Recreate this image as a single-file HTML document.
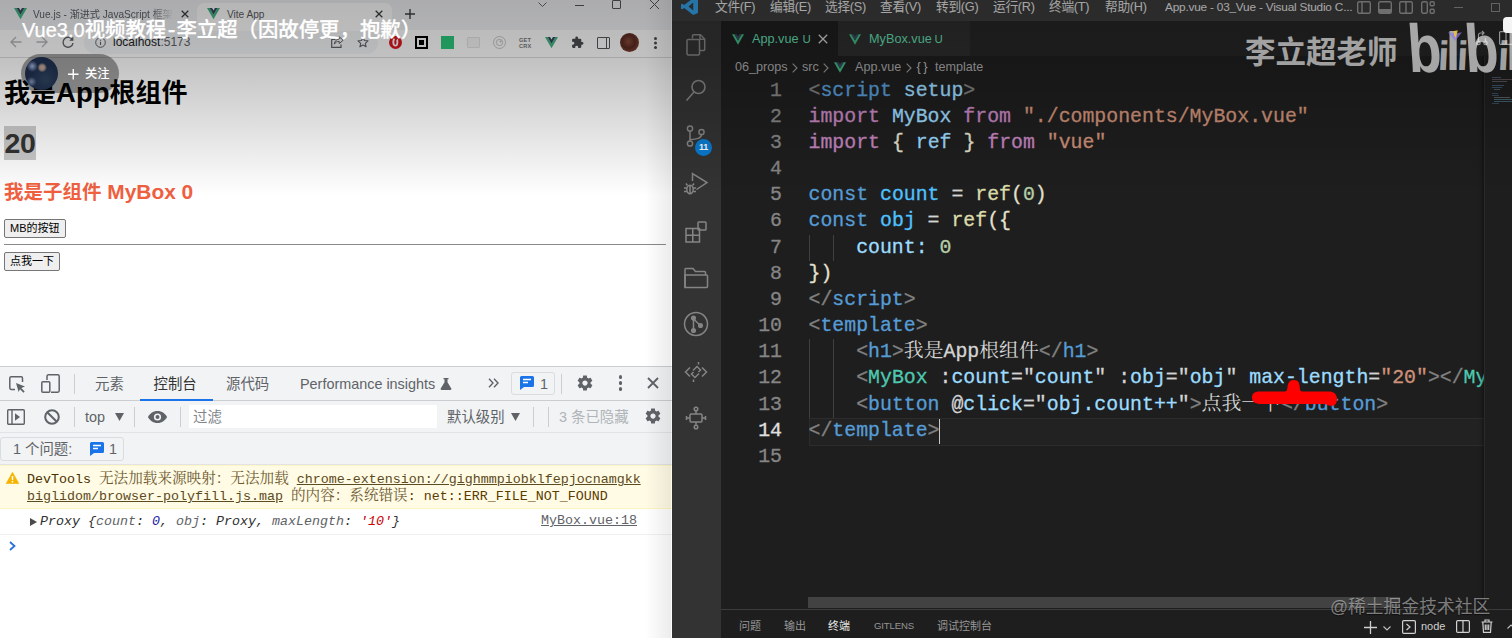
<!DOCTYPE html>
<html lang="zh-CN">
<head>
<meta charset="utf-8">
<title>Vue3.0视频教程</title>
<style>
*{box-sizing:border-box;margin:0;padding:0}
html,body{width:1512px;height:638px;overflow:hidden;background:#1e1e1e}
body{position:relative;font-family:"Liberation Sans","Noto Sans CJK SC",sans-serif}
.abs{position:absolute}
svg{display:block;overflow:visible}
/* ---------- browser ---------- */
#browser{position:absolute;left:0;top:0;width:672px;height:638px;background:#fff;overflow:hidden}
#tabstrip{position:absolute;left:0;top:0;width:672px;height:30px;background:#f1f2f5}
#tab-active{position:absolute;left:197px;top:3px;width:195px;height:27px;background:#fff;border-radius:7px 7px 0 0}
.tabtxt{position:absolute;top:8px;font-size:10.1px;color:#5a5d62;white-space:nowrap;line-height:13px}
#toolbar{position:absolute;left:0;top:30px;width:672px;height:28px;background:#fff;border-bottom:1px solid #dcdcdc}
#omni{position:absolute;left:84px;top:1px;width:294px;height:23px;border-radius:11.5px;background:#f4f6f8}
#page{position:absolute;left:0;top:58px;width:672px;height:309px;background:#fff}
#page h1{position:absolute;left:4px;font-weight:bold;font-size:26px;line-height:34px;white-space:nowrap;color:#000}
#page h2{position:absolute;left:4px;top:120.5px;font-weight:bold;font-size:19.5px;line-height:26px;color:#f0603f;white-space:nowrap}
.btn{position:absolute;left:4px;height:19px;border:1px solid #767676;border-radius:2px;background:#efefef;font-size:11px;line-height:17px;padding:0 5px;color:#000;white-space:nowrap}
/* ---------- devtools ---------- */
#devtools{position:absolute;left:0;top:366px;width:672px;height:272px;background:#fff;border-top:1px solid #cbcdd1;font-size:14.4px;color:#5f6368}
#dt-tabs{position:absolute;left:0;top:0;width:672px;height:34px;background:#f1f3f4;border-bottom:1px solid #cbcdd1}
#dt-bar{position:absolute;left:0;top:34px;width:672px;height:32px;background:#f1f3f4;border-bottom:1px solid #e1e3e6}
#dt-issues{position:absolute;left:0;top:66px;width:672px;height:32px;background:#f1f3f4;border-bottom:1px solid #e1e3e6}
.dtt{position:absolute;top:8px;line-height:19px;white-space:nowrap}
.vsep{position:absolute;width:1px;background:#cbcdd1}
#warn{position:absolute;left:0;top:98px;width:672px;height:44px;background:#fffbe5;border-top:1px solid #fff5c2;border-bottom:1px solid #fff5c2;color:#5c3c00;font-family:"Liberation Mono","Noto Serif CJK SC",monospace;font-size:13.33px;line-height:17px;white-space:nowrap}
.wl{line-height:17px;height:17px}
.cj{font-size:14.6px;line-height:17px;color:#6e5a30}
#warn u{text-decoration:underline;color:#5c4a20}
#logrow{position:absolute;left:0;top:142px;width:672px;height:26px;border-bottom:1px solid #f0f0f0;font-family:"Liberation Mono",monospace;font-size:13.33px;line-height:17px;white-space:nowrap;color:#303030}
.g{color:#5f6368}.nb{color:#1a1aa6}.r{color:#c80000}
/* ---------- vscode ---------- */
#vscode{position:absolute;left:672px;top:0;width:840px;height:638px;background:#1e1e1e;overflow:hidden}
#titlebar{position:absolute;left:0;top:0;width:840px;height:21.5px;background:#3c3c3c;color:#e6e6e6;font-size:12.7px;line-height:15px;white-space:nowrap;letter-spacing:-.25px}
#titlebar span{position:absolute;top:0}
#activity{position:absolute;left:0;top:21px;width:49px;height:617px;background:#333333}
#edtabs{position:absolute;left:49px;top:21px;width:791px;height:35px;background:#252526}
.edtab{position:absolute;top:0;height:35px;font-size:12.7px;line-height:37px;color:#62dcae;white-space:nowrap}
#crumbs{position:absolute;left:49px;top:56px;width:791px;height:22px;font-size:12.6px;line-height:22px;color:#a9a9a9;white-space:nowrap}
#crumbs span{position:absolute;top:0}
#code{position:absolute;left:49px;top:77.6px;-webkit-text-stroke:.3px;width:762px;height:520px;font-family:"Liberation Mono","Noto Sans CJK SC",monospace;font-size:19.85px;color:#d4d4d4}
.ln{position:absolute;left:0;width:762px;height:26.17px;line-height:26.17px;white-space:pre}
.ln i{position:absolute;left:0;width:61px;text-align:right;font-style:normal;color:#858585}
.ln b{position:absolute;left:87.5px;font-weight:normal}
.z{font-family:"Noto Serif CJK SC",serif;-webkit-text-stroke:0;line-height:0}
.w{color:#4fc1ff}.k{color:#569cd6}.p{color:#808080}.c{color:#c586c0}.v{color:#9cdcfe}.s{color:#ce9178}.f{color:#dcdcaa}.n{color:#b5cea8}.t{color:#4ec9b0}.y{color:#e4e0cf}
.ln.cur i{color:#e0e0e0}
.ln.cur::before{content:'';position:absolute;left:88px;top:0;width:674px;height:26px;border:1px solid #2c2c2c;background:#222}
.guide{position:absolute;width:1px;background:#404040}
#panel{position:absolute;left:49px;top:609px;width:791px;height:29px;background:#1e1e1e;border-top:1px solid #3c3c3c;font-size:11px;color:#969696;white-space:nowrap}
#panel span{position:absolute;top:9px;line-height:14px}

#crumbs .gt{color:#8a8a8a;font-size:12px;transform:scaleY(1.15)}
#minimap{position:absolute;left:812px;top:56px;width:28px;height:553px;background:#1e1e1e;border-left:1px solid #2a2a2a;box-shadow:-2px 0 3px rgba(0,0,0,.35)}
#shade{position:absolute;left:0;top:0;width:1512px;height:200px;background:linear-gradient(to bottom,rgba(0,0,0,.29) 0,rgba(0,0,0,.243) 58px,rgba(0,0,0,0) 196px);pointer-events:none}
#vtitle{left:22px;top:16.3px;font-size:20.4px;line-height:28px;color:#fff;white-space:nowrap;font-weight:500;-webkit-text-stroke:.25px #fff}
#vtitle .lt{font-size:20px}
#vtitle .hy{font-size:23px;line-height:20px;margin:0 1px 0 1.5px}
#follow{left:21px;top:53.5px;width:98px;height:39.5px;border-radius:20px;background:rgba(0,0,0,.37)}
#avatar{position:absolute;left:3.5px;top:3.5px;width:33px;height:33px;border-radius:50%;background:radial-gradient(circle at 52% 32%,#9c877c 0,#8a766e 9%,rgba(80,70,80,0) 17%),radial-gradient(circle at 22% 28%,#7f8fb0 0,rgba(80,90,120,0) 16%),radial-gradient(circle at 20% 75%,#6a7a98 0,rgba(60,70,100,0) 14%),radial-gradient(circle at 62% 68%,#25374d 0,#1a2740 45%,#16213a 100%)}
#wm1{left:1245px;top:30px;font-size:30.500px;line-height:44px;font-weight:bold;color:rgba(255,255,255,.6);white-space:nowrap}
#wm2{left:1410px;top:0;width:110px;height:90px;font-weight:bold;color:rgba(255,255,255,.62);white-space:nowrap}
#wm2 span{position:absolute;display:block;transform-origin:0 100%}
#wm2 .bb{font-size:58px;line-height:58px;top:25px;transform:scale(.95,1.17) skewX(5deg)}
#wm2 .bi{font-size:41px;line-height:41px;top:36px;transform:skewX(-3deg)}
#wm2 .bl{font-size:54px;line-height:54px;top:24px;transform:scaleX(.95)}
#wm3{left:1330px;top:593.5px;font-size:17.8px;text-shadow:0 1px 1px rgba(0,0,0,.5);line-height:26px;color:rgba(255,255,255,.45);white-space:nowrap}
</style>
</head>
<body>
<div id="browser">
  <div id="tabstrip">
    <div id="tab-active"></div>
    <svg class="abs" style="left:14px;top:8px" width="13" height="12" viewBox="0 0 26 24"><path d="M0 0h5.2L13 13.5 20.8 0H26L13 22.5z" fill="#41b883"/><path d="M5.2 0h4.9L13 5l2.9-5h4.9L13 13.5z" fill="#35495e"/></svg>
    <span class="tabtxt" id="tt1" style="left:33px;width:141px;overflow:hidden;-webkit-mask-image:linear-gradient(to right,#000 84%,transparent 100%);mask-image:linear-gradient(to right,#000 84%,transparent 100%)">Vue.js - 渐进式 JavaScript 框架</span>
    <svg class="abs" style="left:181px;top:10px" width="8" height="8" viewBox="0 0 8 8"><path d="M0.7 0.7L7.3 7.3M7.3 0.7L0.7 7.3" stroke="#3c4043" stroke-width="1.3" fill="none"/></svg>
    <svg class="abs" style="left:207px;top:8px" width="13" height="12" viewBox="0 0 26 24"><path d="M0 0h5.2L13 13.5 20.8 0H26L13 22.5z" fill="#41b883"/><path d="M5.2 0h4.9L13 5l2.9-5h4.9L13 13.5z" fill="#35495e"/></svg>
    <span class="tabtxt" style="left:227px">Vite App</span>
    <svg class="abs" style="left:375px;top:10px" width="8" height="8" viewBox="0 0 8 8"><path d="M0.7 0.7L7.3 7.3M7.3 0.7L0.7 7.3" stroke="#3c4043" stroke-width="1.3" fill="none"/></svg>
    <svg class="abs" style="left:405px;top:9px" width="10" height="10" viewBox="0 0 10 10"><path d="M5 0v10M0 5h10" stroke="#3c4043" stroke-width="1.4" fill="none"/></svg>
    <svg class="abs" style="left:538px;top:2px" width="9" height="5" viewBox="0 0 9 5"><path d="M0.5 0.5L4.5 4.5L8.5 0.5" stroke="#666" stroke-width="1" fill="none"/></svg>
    <div class="abs" style="left:575px;top:5px;width:9px;height:1px;background:#555"></div>
    <div class="abs" style="left:612px;top:0;width:9px;height:9px;border:1px solid #555;border-radius:1px"></div>
    <svg class="abs" style="left:650px;top:0" width="9" height="9" viewBox="0 0 9 9"><path d="M0 0L9 9M9 0L0 9" stroke="#555" stroke-width="1" fill="none"/></svg>
  </div>
  <div id="toolbar">
    <div id="omni"></div>
    <svg class="abs" style="left:10px;top:6px" width="12" height="12" viewBox="0 0 12 12"><path d="M11.5 6H1.2M6 1L1 6l5 5" stroke="#b4b6b9" stroke-width="1.4" fill="none"/></svg>
    <svg class="abs" style="left:36px;top:6px" width="12" height="12" viewBox="0 0 12 12"><path d="M0.5 6h10.3M6 1l5 5-5 5" stroke="#b4b6b9" stroke-width="1.4" fill="none"/></svg>
    <svg class="abs" style="left:62px;top:6px" width="12" height="12" viewBox="0 0 12 12"><path d="M10.6 4.2A5 5 0 1 0 11 7" stroke="#5f6368" stroke-width="1.4" fill="none"/><path d="M11.4 0.6v4.2H7.2z" fill="#5f6368"/></svg>
    <svg class="abs" style="left:95px;top:7px" width="11" height="11" viewBox="0 0 11 11"><circle cx="5.5" cy="5.5" r="4.8" stroke="#5f6368" stroke-width="1" fill="none"/><path d="M5.5 4.8v3.2M5.5 2.8v1" stroke="#5f6368" stroke-width="1.1"/></svg>
    <span class="abs" id="url" style="left:113px;top:5px;font-size:12px;line-height:15px;color:#202124">localhost<span style="color:#5f6368">:5173</span></span>
    <svg class="abs" style="left:331px;top:6px" width="13" height="12" viewBox="0 0 13 12"><path d="M4.5 3.5H0.7V11.3H10V8.5" stroke="#5f6368" stroke-width="1.2" fill="none"/><path d="M8.2 0.8L12.2 4.2L8.2 7.6V5.4C5.6 5.4 4.2 6.4 3.4 8.2C3.6 5.2 5.2 3.3 8.2 3z" stroke="#5f6368" stroke-width="1" fill="none"/></svg>
    <svg class="abs" style="left:357px;top:6px" width="12" height="12" viewBox="0 0 24 24"><path d="M12 2.5l2.9 6.6 7.1.7-5.4 4.8 1.6 7L12 17.9 5.8 21.6l1.6-7L2 9.8l7.1-.7z" stroke="#5f6368" stroke-width="2.2" fill="none" stroke-linejoin="round"/></svg>
    <svg class="abs" style="left:389px;top:6px" width="13" height="13" viewBox="0 0 13 13"><circle cx="6.5" cy="6.5" r="6.5" fill="#e01822"/><path d="M4.2 2.5C3 5 3 8.3 4.6 9.8C6 11 8 10.6 8.8 9C9.6 7.3 9.4 4.6 8.8 2.5L7.2 4.6C7.6 6 7.6 7.6 7 8.4C6.5 9 5.8 8.8 5.5 8C5.1 6.8 5.3 4.6 6 2.8z" fill="#fff"/></svg>
    <div class="abs" style="left:415px;top:6px;width:13px;height:13px;border:2px solid #000;background:#fff"><div style="margin:2px;width:5px;height:5px;background:#000"></div></div>
    <div class="abs" style="left:441px;top:6px;width:13px;height:13px;background:#2bc97c"></div>
    <div class="abs" style="left:467px;top:7px;width:13px;height:11px;border:1px solid #e4e4e4;border-radius:1px;background:#f6f6f6"></div>
    <svg class="abs" style="left:493px;top:6px" width="13" height="13" viewBox="0 0 13 13"><circle cx="6.5" cy="6.5" r="6" stroke="#c8c8c8" stroke-width="1" fill="none"/><circle cx="6.5" cy="6.5" r="3.2" stroke="#c8c8c8" stroke-width="1" fill="none"/><circle cx="7.5" cy="5.5" r="1" fill="#c0c0c0"/></svg>
    <span class="abs" style="left:519px;top:7px;font-size:5.6px;line-height:6px;font-weight:bold;color:#777;letter-spacing:.2px">GET<br>CRX</span>
    <svg class="abs" style="left:545px;top:7px" width="13" height="12" viewBox="0 0 26 24"><path d="M0 0h5.2L13 13.5 20.8 0H26L13 22.5z" fill="#41b883"/><path d="M5.2 0h4.9L13 5l2.9-5h4.9L13 13.5z" fill="#35495e"/></svg>
    <svg class="abs" style="left:571px;top:6px" width="13" height="13" viewBox="0 0 24 24"><path d="M20.5 11H19V7a2 2 0 0 0-2-2h-4V3.5a2.5 2.5 0 0 0-5 0V5H4a2 2 0 0 0-2 2v3.8h1.5a2.7 2.7 0 0 1 0 5.4H2V20a2 2 0 0 0 2 2h3.8v-1.5a2.7 2.7 0 0 1 5.4 0V22H17a2 2 0 0 0 2-2v-4h1.5a2.5 2.5 0 0 0 0-5z" fill="#4a4d51"/></svg>
    <div class="abs" style="left:597px;top:6.500px;width:13px;height:12px;border:1.700px solid #55585c;border-radius:1px"><div style="position:absolute;right:2px;top:0;width:1.500px;height:100%;background:#55585c"></div></div>
    <div class="abs" style="left:620px;top:3px;width:19px;height:19px;border-radius:50%;background:radial-gradient(circle at 45% 45%,#8a4a3a 0,#5a2a22 45%,#7a3f30 70%,#a77a5a 100%)"></div>
    <div class="abs" style="left:654px;top:7px;width:3px;height:3px;border-radius:50%;background:#4a4d51;box-shadow:0 4.5px 0 #4a4d51,0 9px 0 #4a4d51"></div>
  </div>
  <div id="page">
    <h1 style="top:18px">我是<span style="font-size:27.500px">App</span>根组件</h1>
    <h1 style="top:68px;background:#cbcbcb;color:#333;height:34px;width:32px;font-size:28.500px;line-height:34px;letter-spacing:-.4px;padding-left:.500px;overflow:hidden">20</h1>
    <h2>我是子组件<span style="font-size:20.900px"> MyBox 0</span></h2>
    <div class="btn" style="top:161px">MB的按钮</div>
    <div class="abs" style="left:4px;top:186px;width:662px;height:1px;background:#8a8a8a"></div>
    <div class="btn" style="top:194px">点我一下</div>
  </div>
  <div id="devtools">
    <div id="dt-tabs">
      <svg class="abs" style="left:9px;top:9px" width="17" height="17" viewBox="0 0 17 17"><path d="M6 13.5H2.2A1.4 1.4 0 0 1 .8 12.1V2.2A1.4 1.4 0 0 1 2.2.8h9.9a1.4 1.4 0 0 1 1.4 1.4V6" stroke="#5f6368" stroke-width="1.5" fill="none"/><path d="M7 7l9 3.4-3.7 1.6 3.4 3.4-1.3 1.3-3.4-3.4L9.6 16z" fill="#5f6368"/></svg>
      <svg class="abs" style="left:41px;top:7px" width="19" height="19" viewBox="0 0 19 19"><path d="M6 6V2.2A1.4 1.4 0 0 1 7.400 .8h9.400a1.400 1.400 0 0 1 1.400 1.400v14.600a1.400 1.400 0 0 1-1.400 1.400H10" stroke="#5f6368" stroke-width="1.5" fill="none"/><rect x=".8" y="7.800" width="8" height="10.400" rx="1" stroke="#5f6368" stroke-width="1.500" fill="none"/></svg>
      <div class="vsep" style="left:74px;top:7px;height:20px"></div>
      <span class="dtt" style="left:95px">元素</span>
      <span class="dtt" style="left:153.5px;color:#333">控制台</span>
      <div class="abs" style="left:140px;top:32px;width:73px;height:2px;background:#1a73e8"></div>
      <span class="dtt" style="left:226px">源代码</span>
      <span class="dtt" style="left:300px">Performance insights</span>
      <svg class="abs" style="left:440px;top:11px" width="12" height="12" viewBox="0 0 12 12"><path d="M3.500 0h5v1.200h-1v3l3.800 6.300a1 1 0 0 1-.9 1.500H1.600a1 1 0 0 1-.9-1.500L4.500 4.200v-3h-1z" fill="#5f6368"/></svg>
      <svg class="abs" style="left:488px;top:11px" width="11" height="10" viewBox="0 0 11 10"><path d="M1 .8L5 5 1 9.200M6 .8L10 5 6 9.200" stroke="#5f6368" stroke-width="1.400" fill="none"/></svg>
      <div class="abs" style="left:511px;top:5px;width:44px;height:23px;border:1px solid #dadce0;border-radius:3px"></div>
      <svg class="abs" style="left:520px;top:9px" width="14" height="14" viewBox="0 0 14 14"><path d="M1.500 0h11A1.500 1.500 0 0 1 14 1.500v8A1.500 1.500 0 0 1 12.500 11H4l-4 3V1.500A1.500 1.500 0 0 1 1.500 0z" fill="#1a73e8"/><path d="M3 3.500h8M3 6.500h5" stroke="#fff" stroke-width="1.300"/></svg>
      <span class="dtt" style="left:540px;color:#5f6368">1</span>
      <div class="vsep" style="left:561px;top:7px;height:20px"></div>
      <svg class="abs gear" style="left:576px;top:7px" width="18" height="18" viewBox="0 0 24 24"><path d="M19.430 12.980c.040-.320.070-.640.070-.980s-.030-.660-.070-.980l2.110-1.650c.190-.150.240-.420.120-.640l-2-3.460c-.120-.220-.390-.300-.610-.220l-2.490 1c-.520-.400-1.080-.730-1.690-.980l-.380-2.650C14.460 2.180 14.250 2 14 2h-4c-.250 0-.460.180-.490.420l-.38 2.650c-.610.250-1.170.590-1.690.980l-2.490-1c-.230-.090-.490 0-.610.220l-2 3.460c-.130.220-.070.490.12.640l2.110 1.650c-.040.320-.070.650-.070.980s.030.660.070.980l-2.110 1.650c-.190.150-.240.420-.12.640l2 3.460c.120.220.390.300.610.220l2.490-1c.520.400 1.080.730 1.690.980l.38 2.650c.030.240.240.420.490.420h4c.250 0 .460-.180.490-.420l.38-2.650c.610-.250 1.170-.590 1.690-.980l2.490 1c.230.090.490 0 .610-.220l2-3.460c.120-.220.070-.490-.12-.640l-2.110-1.650zM12 15.500c-1.930 0-3.500-1.570-3.500-3.500s1.570-3.500 3.500-3.500 3.500 1.570 3.500 3.500-1.570 3.500-3.500 3.500z" fill="#5f6368"/></svg>
      <div class="abs" style="left:618.500px;top:8px;width:3.500px;height:3.500px;border-radius:50%;background:#5f6368;box-shadow:0 6px 0 #5f6368,0 12px 0 #5f6368"></div>
      <svg class="abs" style="left:647px;top:10px" width="12" height="12" viewBox="0 0 12 12"><path d="M1 1l10 10M11 1L1 11" stroke="#5f6368" stroke-width="1.800" fill="none"/></svg>
    </div>
    <div id="dt-bar">
      <svg class="abs" style="left:7px;top:8px" width="18" height="16" viewBox="0 0 18 16"><rect x=".700" y=".700" width="16.600" height="14.600" rx="1" stroke="#5f6368" stroke-width="1.400" fill="none"/><path d="M5 .700v14.600" stroke="#5f6368" stroke-width="1.400"/><path d="M8 4.200l5 3.800-5 3.800z" fill="#5f6368"/></svg>
      <svg class="abs" style="left:44px;top:8px" width="16" height="16" viewBox="0 0 16 16"><circle cx="8" cy="8" r="6.800" stroke="#5f6368" stroke-width="2" fill="none"/><path d="M3.200 3.200l9.600 9.600" stroke="#5f6368" stroke-width="2"/></svg>
      <div class="vsep" style="left:74px;top:6px;height:20px"></div>
      <span class="dtt" style="left:85px;top:7px">top</span>
      <svg class="abs" style="left:115px;top:12px" width="9" height="8" viewBox="0 0 9 8"><path d="M0 0h9L4.500 8z" fill="#5f6368"/></svg>
      <div class="vsep" style="left:134px;top:6px;height:20px"></div>
      <svg class="abs" style="left:148px;top:10px" width="19" height="12" viewBox="0 0 19 12"><path d="M9.500 0C5 0 1.500 2.700 0 6c1.500 3.300 5 6 9.500 6s8-2.700 9.500-6C17.500 2.700 14 0 9.500 0z" fill="#5f6368"/><circle cx="9.500" cy="6" r="3.600" fill="#f1f3f4"/><circle cx="9.500" cy="6" r="2" fill="#5f6368"/></svg>
      <div class="vsep" style="left:180px;top:6px;height:20px"></div>
      <div class="abs" style="left:189px;top:4px;width:248px;height:23px;background:#fff;border-radius:1px"></div>
      <span class="dtt" style="left:193px;top:7px;color:#80868b">过滤</span>
      <span class="dtt" style="left:447px;top:7px">默认级别</span>
      <svg class="abs" style="left:511px;top:12px" width="9" height="8" viewBox="0 0 9 8"><path d="M0 0h9L4.500 8z" fill="#5f6368"/></svg>
      <div class="vsep" style="left:533px;top:6px;height:20px"></div>
      <div class="vsep" style="left:548px;top:6px;height:20px"></div>
      <span class="dtt" style="left:559px;top:7px;color:#b0b3b8">3 条已隐藏</span>
      <svg class="abs gear" style="left:644px;top:6px" width="18" height="18" viewBox="0 0 24 24"><path d="M19.430 12.980c.040-.320.070-.640.070-.980s-.030-.660-.070-.980l2.110-1.650c.190-.150.240-.420.120-.640l-2-3.460c-.120-.220-.390-.300-.610-.220l-2.490 1c-.520-.400-1.080-.730-1.690-.980l-.380-2.650C14.460 2.180 14.250 2 14 2h-4c-.250 0-.460.180-.490.420l-.38 2.650c-.610.250-1.170.590-1.690.980l-2.490-1c-.230-.090-.490 0-.610.220l-2 3.460c-.130.220-.070.490.12.640l2.110 1.650c-.040.320-.070.650-.070.980s.030.660.070.980l-2.110 1.650c-.190.150-.240.420-.12.640l2 3.460c.120.220.390.300.610.220l2.490-1c.520.400 1.080.730 1.690.980l.38 2.650c.030.240.240.420.490.420h4c.250 0 .460-.180.490-.420l.38-2.650c.610-.250 1.170-.590 1.690-.980l2.490 1c.230.090.490 0 .610-.220l2-3.460c.120-.220.070-.490-.12-.640l-2.110-1.650zM12 15.500c-1.930 0-3.500-1.570-3.500-3.500s1.570-3.500 3.500-3.500 3.500 1.570 3.500 3.500-1.570 3.500-3.500 3.500z" fill="#5f6368"/></svg>
    </div>
    <div id="dt-issues">
      <div class="abs" style="left:0;top:4px;width:124px;height:24px;border:1px solid #dadce0;border-radius:3px;background:#f1f3f4"></div>
      <span class="dtt" style="left:13px;top:7px">1 个问题:</span>
      <svg class="abs" style="left:90px;top:9px" width="14" height="14" viewBox="0 0 14 14"><path d="M1.500 0h11A1.500 1.500 0 0 1 14 1.500v8A1.500 1.500 0 0 1 12.500 11H4l-4 3V1.500A1.500 1.500 0 0 1 1.500 0z" fill="#1a73e8"/><path d="M3 3.500h8M3 6.500h5" stroke="#fff" stroke-width="1.300"/></svg>
      <span class="dtt" style="left:109px;top:7px">1</span>
    </div>
    <div id="warn">
      <svg class="abs" style="left:6px;top:6px" width="13" height="12" viewBox="0 0 13 12"><path d="M6.500 0.300L12.800 11.500H0.200z" fill="#f4b400" stroke="#f4b400" stroke-width=".600" stroke-linejoin="round"/><path d="M6.500 4v4" stroke="#fff" stroke-width="1.500"/><circle cx="6.500" cy="9.700" r=".850" fill="#fff"/></svg>
      <span class="abs wl" style="left:27px;top:5px"><span style="color:#4a3200">DevTools</span> <span class="cj">无法加载来源映射：无法加载</span> <u>chrome-extension://gighmmpiobklfepjocnamgkk</u></span>
      <span class="abs wl" style="left:27px;top:22px"><u>biglidom/browser-polyfill.js.map</u> <span class="cj">的内容：系统错误</span>: net::ERR_FILE_NOT_FOUND</span>
    </div>
    <div id="logrow">
      <svg class="abs" style="left:30px;top:9px" width="7" height="8" viewBox="0 0 7 8"><path d="M0 0l7 4-7 4z" fill="#4a4a4a"/></svg>
      <span class="abs" style="left:40px;top:4px;font-style:italic">Proxy {<span class="g">count</span>: <span class="nb">0</span>, <span class="g">obj</span>: Proxy, <span class="g">maxLength</span>: <span class="r">'10'</span>}</span>
      <span class="abs" style="left:541px;top:3px;text-decoration:underline;color:#5f6368">MyBox.vue:18</span>
    </div>
    <svg class="abs" style="left:9px;top:174px" width="7" height="10" viewBox="0 0 7 10"><path d="M1 1l4.500 4L1 9" stroke="#2a6fdb" stroke-width="1.800" fill="none"/></svg>
  </div>
</div>

<div id="vscode">
  <div id="titlebar">
    <svg class="abs" style="left:9px;top:-2.500px" width="17" height="17" viewBox="0 0 16 16"><path d="M11.500 0L16 2v12l-4.500 2L3 9.300 1.200 10.700 0 10V6l1.200-.700L3 6.700zM11.500 4.300L7 8l4.500 3.700z" fill="#35a2ea"/></svg>
    <span style="left:43px">文件(F)</span><span style="left:98px">编辑(E)</span><span style="left:153px">选择(S)</span><span style="left:208px">查看(V)</span><span style="left:264px">转到(G)</span><span style="left:321px">运行(R)</span><span style="left:377px">终端(T)</span><span style="left:433px">帮助(H)</span>
    <span style="left:493px;font-size:11.8px;letter-spacing:-.2px">App.vue - 03_Vue - Visual Studio C...</span>
    <svg class="abs" style="left:685px;top:1px" width="14" height="13" viewBox="0 0 14 13"><rect x=".700" y=".700" width="12.600" height="11.600" rx="1.500" stroke="#9a9a9a" stroke-width="1.400" fill="none"/><path d="M5 .700v11.600" stroke="#9a9a9a" stroke-width="1.400"/></svg>
    <svg class="abs" style="left:706px;top:1px" width="14" height="13" viewBox="0 0 14 13"><rect x=".700" y=".700" width="12.600" height="11.600" rx="1.500" stroke="#9a9a9a" stroke-width="1.400" fill="none"/><rect x="1" y="8" width="12" height="4" fill="#9a9a9a"/></svg>
    <svg class="abs" style="left:727px;top:1px" width="14" height="13" viewBox="0 0 14 13"><rect x=".700" y=".700" width="12.600" height="11.600" rx="1.500" stroke="#9a9a9a" stroke-width="1.400" fill="none"/><path d="M7 .700v11.600" stroke="#9a9a9a" stroke-width="1.400"/></svg>
    <svg class="abs" style="left:749px;top:1px" width="14" height="13" viewBox="0 0 14 13"><rect x=".700" y=".700" width="5.600" height="11.600" rx="1.500" stroke="#9a9a9a" stroke-width="1.400" fill="none"/><rect x="9.200" y=".700" width="4" height="4" rx="1.200" stroke="#9a9a9a" stroke-width="1.400" fill="none"/><rect x="9.200" y="8.300" width="4" height="4" rx="1.200" stroke="#9a9a9a" stroke-width="1.400" fill="none"/></svg>
    <div class="abs" style="left:782px;top:7px;width:9px;height:1px;background:#8a8a8a"></div>
    <div class="abs" style="left:819px;top:3px;width:9px;height:9px;border:1px solid #8a8a8a"></div>
  </div>
  <div id="activity">
    <svg class="abs" style="left:12px;top:12px" width="24" height="24" viewBox="0 0 24 24" fill="none" stroke="#858585" stroke-width="1.500"><path d="M8.500 5.500V2.800a1 1 0 0 1 1-1h7l4.200 4.200v10.500a1 1 0 0 1-1 1H16"/><path d="M16 1.800v4.400h4.500"/><rect x="3" y="6.500" width="12.500" height="15.500" rx="1.200"/></svg>
    <svg class="abs" style="left:12px;top:57px" width="24" height="24" viewBox="0 0 24 24" fill="none" stroke="#858585" stroke-width="1.600"><circle cx="14.500" cy="9" r="6.500"/><path d="M10 14L2.500 22.500"/></svg>
    <svg class="abs" style="left:12px;top:103px" width="24" height="24" viewBox="0 0 24 24" fill="none" stroke="#858585" stroke-width="1.500"><circle cx="6" cy="4.500" r="2.600"/><circle cx="6" cy="19.500" r="2.600"/><circle cx="17.500" cy="8" r="2.600"/><path d="M6 7.100v9.800M17.500 10.600c0 4-5 4.500-11.500 5"/></svg>
    <div class="abs" style="left:23px;top:118px;width:17px;height:17px;border-radius:50%;background:#0a7bd0;color:#fff;font-size:9px;font-weight:bold;line-height:17px;text-align:center;letter-spacing:-.3px">11</div>
    <svg class="abs" style="left:11px;top:151px" width="26" height="24" viewBox="0 0 26 24" fill="none" stroke="#858585" stroke-width="1.500"><path d="M9.500 9V1.500L24 10.500 13.500 17.500"/><ellipse cx="7" cy="17.500" rx="3.200" ry="4.200"/><path d="M7 13.300v8.400M3.800 16H1M3.800 19.500H1M10.200 16H13M10.200 19.500H13M4.500 13.500L3 11.500M9.500 13.500L11 11.500"/></svg>
    <svg class="abs" style="left:12px;top:199px" width="24" height="24" viewBox="0 0 24 24" fill="none" stroke="#858585" stroke-width="1.500"><path d="M2 8.500h13.500V22H2zM8.750 8.500V22M2 15.250h13.500"/><rect x="14" y="2" width="8" height="8" rx=".800"/></svg>
    <svg class="abs" style="left:11px;top:246px" width="26" height="22" viewBox="0 0 26 22" fill="none" stroke="#858585" stroke-width="1.500"><path d="M2 20.500V2.500a1 1 0 0 1 1-1h7l2.500 3h9a1 1 0 0 1 1 1V8"/><path d="M2 8h21.500a1 1 0 0 1 1 1v10.500a1 1 0 0 1-1 1H2z"/></svg>
    <svg class="abs" style="left:11px;top:290px" width="26" height="26" viewBox="0 0 26 26" fill="none" stroke="#858585" stroke-width="1.500"><circle cx="13" cy="13" r="11.500"/><circle cx="10.500" cy="7" r="1.800" fill="#858585"/><circle cx="10.500" cy="19.500" r="1.800" fill="#858585"/><circle cx="17.500" cy="14.500" r="1.800" fill="#858585"/><path d="M10.500 7v12.500M10.500 8l7 6.500"/></svg>
    <svg class="abs" style="left:12px;top:339px" width="24" height="24" viewBox="0 0 24 24" fill="none" stroke="#858585" stroke-width="1.500"><path d="M6 7.500L1.500 12 6 16.500M18 7.500l4.500 4.500-4.500 4.500"/><path d="M9 10.500l4-4 3.500 3.500-2 2M15 13.500l-4 4-3.500-3.500 2-2"/><path d="M14.500 4.500V2M9.500 19.500V22"/></svg>
    <svg class="abs" style="left:12px;top:385px" width="24" height="24" viewBox="0 0 24 24" fill="none" stroke="#858585" stroke-width="1.500"><circle cx="12" cy="3" r="1.800"/><circle cx="12" cy="21" r="1.800"/><path d="M12 4.800V8M12 16v3.200"/><rect x="6" y="8" width="12" height="8" rx="1"/><path d="M6 12H2.500M18 12h3.500M2.500 10v4M21.500 10v4"/></svg>
  </div>
  <div id="edtabs">
    <div class="edtab" style="left:0;width:117px;background:#1e1e1e"><svg class="abs" style="left:11px;top:13px" width="12" height="11" viewBox="0 0 26 22.5"><path d="M0 0h5.2L13 13.500 20.800 0H26L13 22.500z" fill="#41b883"/><path d="M5.200 0h4.900L13 5l2.900-5h4.900L13 13.500z" fill="#35495e"/></svg><span class="abs" style="left:31px">App.vue</span><span class="abs" style="left:81.500px;font-size:11.500px">U</span>
      <svg class="abs" style="left:97px;top:13px" width="10" height="10" viewBox="0 0 10 10"><path d="M.800 .800l8.400 8.400M9.200 .800L.800 9.200" stroke="#d0d0d0" stroke-width="1.300" fill="none"/></svg></div>
    <div class="edtab" style="left:117px;width:132px;background:#2d2d2d"><svg class="abs" style="left:11px;top:13px" width="12" height="11" viewBox="0 0 26 22.5"><path d="M0 0h5.2L13 13.500 20.800 0H26L13 22.500z" fill="#41b883"/><path d="M5.200 0h4.900L13 5l2.900-5h4.900L13 13.500z" fill="#35495e"/></svg><span class="abs" style="left:31px">MyBox.vue</span><span class="abs" style="left:96.500px;font-size:11.500px">U</span></div>
    <svg class="abs" style="left:755px;top:9px" width="12" height="16" viewBox="0 0 12 16" fill="none" stroke="#c5c5c5" stroke-width="1.200"><circle cx="2.500" cy="13" r="1.700"/><circle cx="9.500" cy="13" r="1.700"/><path d="M2.500 11.300V5a2 2 0 0 1 2-2h3M6 1l2 2-2 2M9.500 11.300V8"/></svg>
    <svg class="abs" style="left:778px;top:10px" width="14" height="14" viewBox="0 0 14 14" fill="none" stroke="#c5c5c5" stroke-width="1.200"><rect x=".600" y=".600" width="12.800" height="12.800" rx="1"/><path d="M7 .600v12.800"/></svg>
  </div>
  <div id="crumbs">
    <span style="left:14px">06_props</span><svg class="abs" style="left:70.5px;top:6.500px" width="6" height="10" viewBox="0 0 6 10"><path d="M.700 .700L5 5 .700 9.300" stroke="#9a9a9a" stroke-width="1.100" fill="none"/></svg><span style="left:81px">src</span><svg class="abs" style="left:102px;top:6.500px" width="6" height="10" viewBox="0 0 6 10"><path d="M.700 .700L5 5 .700 9.300" stroke="#9a9a9a" stroke-width="1.100" fill="none"/></svg><svg class="abs" style="left:113px;top:6px" width="12" height="11" viewBox="0 0 26 22.5"><path d="M0 0h5.2L13 13.500 20.800 0H26L13 22.500z" fill="#41b883"/><path d="M5.200 0h4.900L13 5l2.900-5h4.900L13 13.500z" fill="#35495e"/></svg><span style="left:134px">App.vue</span><svg class="abs" style="left:185px;top:6.500px" width="6" height="10" viewBox="0 0 6 10"><path d="M.700 .700L5 5 .700 9.300" stroke="#9a9a9a" stroke-width="1.100" fill="none"/></svg><span style="left:195.500px;font-size:13px;letter-spacing:2.500px;color:#b8b8b8">{}</span><span style="left:214px">template</span>
  </div>
  <div id="code">
    <div class="guide" style="left:88px;top:157px;height:26.200px"></div><div class="guide" style="left:111.800px;top:157px;height:26.200px"></div>
    <div class="guide" style="left:88px;top:261.700px;height:78.500px"></div><div class="guide" style="left:111.800px;top:261.700px;height:78.500px"></div>
    <div class="abs" style="left:217.700px;top:341.500px;width:1.500px;height:25px;background:#c8c8c8;z-index:3"></div>
    <div class="ln" style="top:0.0px"><i>1</i><b><span class="p">&lt;</span><span class="k">script</span> <span class="v">setup</span><span class="p">&gt;</span></b></div>
    <div class="ln" style="top:26.17px"><i>2</i><b><span class="c">import</span> <span class="v">MyBox</span> <span class="c">from</span> <span class="s">"./components/MyBox.vue"</span></b></div>
    <div class="ln" style="top:52.34px"><i>3</i><b><span class="c">import</span> <span class="y">{</span> <span class="v">ref</span> <span class="y">}</span> <span class="c">from</span> <span class="s">"vue"</span></b></div>
    <div class="ln" style="top:78.51px"><i>4</i><b></b></div>
    <div class="ln" style="top:104.68px"><i>5</i><b><span class="k">const</span> <span class="w">count</span> = <span class="f">ref</span><span class="y">(</span><span class="n">0</span><span class="y">)</span></b></div>
    <div class="ln" style="top:130.85px"><i>6</i><b><span class="k">const</span> <span class="w">obj</span> = <span class="f">ref</span><span class="y">({</span></b></div>
    <div class="ln" style="top:157.02px"><i>7</i><b>    <span class="v">count:</span> <span class="n">0</span></b></div>
    <div class="ln" style="top:183.19px"><i>8</i><b><span class="y">})</span></b></div>
    <div class="ln" style="top:209.36px"><i>9</i><b><span class="p">&lt;/</span><span class="k">script</span><span class="p">&gt;</span></b></div>
    <div class="ln" style="top:235.53px"><i>10</i><b><span class="p">&lt;</span><span class="k">template</span><span class="p">&gt;</span></b></div>
    <div class="ln" style="top:261.7px"><i>11</i><b>    <span class="p">&lt;</span><span class="k">h1</span><span class="p">&gt;</span><span class="z">我是</span>App<span class="z">根组件</span><span class="p">&lt;/</span><span class="k">h1</span><span class="p">&gt;</span></b></div>
    <div class="ln" style="top:287.87px"><i>12</i><b>    <span class="p">&lt;</span><span class="t">MyBox</span> :<span class="v">count</span>="<span class="v">count</span>" :<span class="v">obj</span>="<span class="v">obj</span>" <span class="v">max-length</span>=<span class="s">"20"</span><span class="p">&gt;&lt;/</span><span class="t">My</span></b></div>
    <div class="ln" style="top:314.04px"><i>13</i><b>    <span class="p">&lt;</span><span class="k">button</span> @<span class="v">click</span>="<span class="v">obj.count++</span>"<span class="p">&gt;</span><span class="z">点我一下</span><span class="p">&lt;/</span><span class="k">button</span><span class="p">&gt;</span></b></div>
    <div class="ln cur" style="top:340.21px"><i>14</i><b><span class="p">&lt;/</span><span class="k">template</span><span class="p">&gt;</span></b></div>
    <div class="ln" style="top:366.38px"><i>15</i><b></b></div>
  </div>
  <div class="abs" style="left:136px;top:597px;width:592px;height:11px;background:#424242"></div>
  <div id="minimap">
    <div class="abs" style="left:7px;top:21px;width:9px;height:1px;opacity:.55;background:#5b7fa3"></div>
    <div class="abs" style="left:7px;top:23px;width:22px;height:1px;opacity:.55;background:#8a6f7f"></div>
    <div class="abs" style="left:7px;top:25px;width:15px;height:1px;opacity:.55;background:#7f7f8f"></div>
    <div class="abs" style="left:7px;top:29px;width:12px;height:1px;opacity:.55;background:#4f7fa8"></div>
    <div class="abs" style="left:7px;top:31px;width:10px;height:1px;opacity:.55;background:#4f7fa8"></div>
    <div class="abs" style="left:9px;top:33px;width:6px;height:1px;opacity:.55;background:#6f8f9f"></div>
    <div class="abs" style="left:7px;top:37px;width:6px;height:1px;opacity:.55;background:#4f6f8f"></div>
    <div class="abs" style="left:7px;top:39px;width:7px;height:1px;opacity:.55;background:#4f6f8f"></div>
    <div class="abs" style="left:9px;top:41px;width:16px;height:1px;opacity:.55;background:#7f8f9f"></div>
    <div class="abs" style="left:9px;top:43px;width:22px;height:1px;opacity:.55;background:#5f9faf"></div>
    <div class="abs" style="left:9px;top:45px;width:22px;height:1px;opacity:.55;background:#5f8faf"></div>
    <div class="abs" style="left:7px;top:47px;width:7px;height:1px;opacity:.55;background:#4f6f8f"></div>
  </div>
  <div id="panel">
    <span style="left:18px">问题</span><span style="left:63px">输出</span><span style="left:107px;color:#e7e7e7">终端</span><span style="left:153px;font-size:9.600px;letter-spacing:-.15px">GITLENS</span><span style="left:216px">调试控制台</span>
    <svg class="abs" style="left:643px;top:11px" width="13" height="13" viewBox="0 0 13 13"><path d="M6.500 0v13M0 6.500h13" stroke="#d0d0d0" stroke-width="1.300"/></svg>
    <svg class="abs" style="left:662px;top:16px" width="8" height="5" viewBox="0 0 8 5"><path d="M.500 .500l3.500 3.500L7.500 .500" stroke="#c0c0c0" stroke-width="1.100" fill="none"/></svg>
    <svg class="abs" style="left:681px;top:10px" width="14" height="14" viewBox="0 0 14 14" fill="none" stroke="#d0d0d0" stroke-width="1.200"><rect x=".600" y=".600" width="12.800" height="12.800" rx="1.200"/><path d="M4.500 4l3.500 3-3.500 3"/></svg>
    <span style="left:700px;top:9px;color:#d0d0d0;font-size:11px">node</span>
    <svg class="abs" style="left:735px;top:10px" width="14" height="13" viewBox="0 0 14 13" fill="none" stroke="#d0d0d0" stroke-width="1.200"><rect x=".600" y=".600" width="12.800" height="11.800" rx="1.200"/><path d="M7 .600v11.800"/></svg>
    <svg class="abs" style="left:760px;top:9px" width="12" height="14" viewBox="0 0 12 14" fill="none" stroke="#d0d0d0" stroke-width="1.200"><path d="M.500 3h11M4 3V1h4v2M1.800 3l.7 10.400h7L10.200 3M4.300 5.500v5.500M6 5.500v5.500M7.700 5.500v5.500"/></svg>
    <svg class="abs" style="left:786px;top:14px" width="8" height="5" viewBox="0 0 8 5"><path d="M.500 4.500l3.500-3.500 3.500 3.500" stroke="#c0c0c0" stroke-width="1.100" fill="none"/></svg>
  </div>
</div>

<div id="shade"></div>
<div class="abs" style="left:645px;top:0;width:26px;height:638px;background:linear-gradient(to right,rgba(0,0,0,0),rgba(0,0,0,.075))"></div>
<div class="abs" id="vtitle"><span class="lt">Vue3.0</span>视频教程<span class="hy">-</span>李立超（因故停更，抱歉）</div>
<div class="abs" id="follow"><div id="avatar"></div><svg class="abs" style="left:47px;top:15px" width="10.500" height="10.500" viewBox="0 0 10 10"><path d="M5 0v10M0 5h10" stroke="#fff" stroke-width="1.300"/></svg><span class="abs" style="left:64px;top:11px;font-size:12.300px;line-height:18px;color:#fff;font-weight:500">关注</span></div>
<div class="abs" id="wm1">李立超老师</div>
<div class="abs" id="wm2"><span class="bb" style="left:0">b</span><span class="bi" style="left:26.500px">i</span><span class="bl" style="left:35.500px">l</span><span class="bi" style="left:45.500px">i</span><span class="bb" style="left:57px">b</span><span class="bi" style="left:87px">i</span><span class="bl" style="left:96px">l</span><span class="bi" style="left:106px">i</span></div>
<div class="abs" style="left:1503px;top:17px;width:14px;height:16px;border-radius:4px;background:#f4f4f4"></div>
<svg class="abs" style="left:1448px;top:31px;opacity:.8" width="14" height="10" viewBox="0 0 17 12"><path d="M0 1.500L8.500 12 17 1.500 9.500 3z" fill="#8f7be8" opacity=".85"/><path d="M7 0l5-1-2.500 9-2-3z" fill="#f7c531"/></svg>
<div class="abs" id="wm3">@稀土掘金技术社区</div>
<svg class="abs" style="left:1250px;top:378px" width="92" height="30" viewBox="0 0 92 30"><path d="M2 19.500c0-4 3-6 7-6h26c1.500 0 2.200-1 2.500-4.500.4-4 2-7 6.500-7s5.500 3 5.700 7c.2 3.500.8 4.500 3 4.500h26c5 0 8.500 2.500 8.300 8 -.2 4.500-2.500 6.500-6 6.300-3-.2-4-1.800-8-1.800H12c-6 0-10-1.500-10-6.500z" fill="#ff0000"/></svg>
</body>
</html>
